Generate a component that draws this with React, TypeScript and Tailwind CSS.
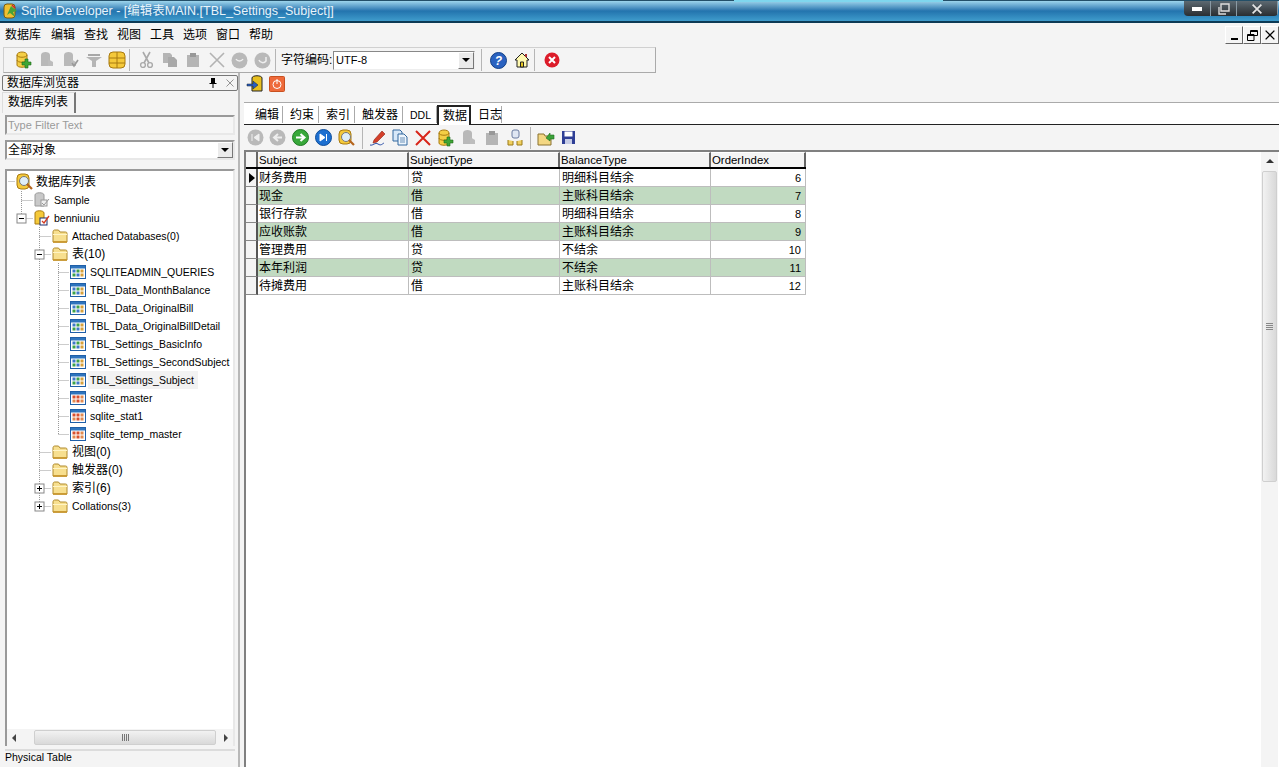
const FONT = "font-['Liberation_Sans','Noto_Sans_CJK_SC',sans-serif]";

function DbAdd() {
  return (
    <svg width="18" height="18" viewBox="0 0 18 18">
      <path d="M2 4c0-4 10-4 10 0v10c0 3-10 3-10 0z" fill="#f5cf45" stroke="#a87a10" />
      <path d="M2 4c0 3 10 3 10 0M2 9c0 3 10 3 10 0" fill="none" stroke="#a87a10" />
      <path d="M10 8h3v3h3v3h-3v3h-3v-3H7v-3h3z" fill="#3fa535" stroke="#1d6a1a" strokeWidth=".6" />
    </svg>
  );
}

function GrayDb({ check }: { check?: boolean }) {
  return (
    <svg width="18" height="18" viewBox="0 0 18 18">
      <path d="M3 4c0-4 9-4 9 0v11H3z" fill="#b9b9b9" />
      <path d="M10 8l5 3v4h-5z" fill="#bdbdbd" />
      {check && <path d="M11 12l2 3 4-6" fill="none" stroke="#9a9a9a" strokeWidth="1.6" />}
    </svg>
  );
}

function DbGrid() {
  return (
    <svg width="18" height="18" viewBox="0 0 18 18">
      <rect x="1" y="1" width="16" height="16" rx="4" fill="#f5c93a" stroke="#a87a10" />
      <path d="M1 7h16M1 12h16M9 1v16" stroke="#a87a10" />
    </svg>
  );
}

function Filter() {
  return (
    <svg width="18" height="18" viewBox="0 0 18 18">
      <path d="M3 3h12v2H3z" fill="#a8a8a8" />
      <path d="M1 6h16l-6 4v6H7v-6z" fill="#b5b5b5" />
    </svg>
  );
}

function Scissors() {
  return (
    <svg width="16" height="18" viewBox="0 0 16 18" fill="none" stroke="#aaa">
      <path d="M4 1l6 11M11 1L5 12" strokeWidth="1.6" />
      <circle cx="4" cy="14" r="2.4" strokeWidth="1.4" />
      <circle cx="11" cy="14" r="2.4" strokeWidth="1.4" />
    </svg>
  );
}

function GrayCopy() {
  return (
    <svg width="16" height="16" viewBox="0 0 16 16" fill="#b5b5b5">
      <path d="M1 1h7l2 2v8H1z" />
      <path d="M6 5h6l3 3v7H6z" fill="#a9a9a9" />
    </svg>
  );
}

function GrayPaste() {
  return (
    <svg width="16" height="16" viewBox="0 0 16 16">
      <path d="M2 3h12v12H2z" fill="#b5b5b5" />
      <path d="M5 1h6v4H5z" fill="#989898" />
    </svg>
  );
}

function Cross({ color = "#b3b3b3", w = 1.6, s = 16 }: { color?: string; w?: number; s?: number }) {
  return (
    <svg width={s} height={s} viewBox="0 0 16 16">
      <path d="M1 1l14 14M15 1L1 15" stroke={color} strokeWidth={w} />
    </svg>
  );
}

function Round({ kind }: { kind: "undo" | "redo" | "first" | "prev" }) {
  return (
    <svg width="17" height="17" viewBox="0 0 17 17">
      <circle cx="8.5" cy="8.5" r="8" fill="#b9b9b9" />
      {kind === "undo" && <path d="M5 7a4 4 0 0 0 7 0" fill="none" stroke="#eee" strokeWidth="1.5" />}
      {kind === "redo" && <path d="M5 8a4 4 0 0 0 7 1V5" fill="none" stroke="#eee" strokeWidth="1.5" />}
      {kind === "first" && <path d="M5 5v7M12 5L7 8.5l5 3.5z" fill="#eee" stroke="#eee" />}
      {kind === "prev" && <path d="M13 8.5H6M9 5L5 8.5 9 12" fill="none" stroke="#eee" strokeWidth="2" />}
    </svg>
  );
}

function GreenNext() {
  return (
    <svg width="17" height="17" viewBox="0 0 17 17">
      <circle cx="8.5" cy="8.5" r="8" fill="#38a83a" stroke="#1f7a24" />
      <path d="M4 8.5h8M8.5 5l4 3.5-4 3.5" fill="none" stroke="#fff" strokeWidth="2" />
    </svg>
  );
}

function BlueLast() {
  return (
    <svg width="17" height="17" viewBox="0 0 17 17">
      <circle cx="8.5" cy="8.5" r="8" fill="#1c6fd0" stroke="#0f4d9a" />
      <path d="M5 5l5 3.5L5 12zM11.5 5v7" fill="#fff" stroke="#fff" />
    </svg>
  );
}

function SearchDb() {
  return (
    <svg width="18" height="18" viewBox="0 0 18 18">
      <rect x="1" y="1" width="12" height="14" rx="4" fill="#f5c93a" stroke="#a87a10" />
      <circle cx="8" cy="8" r="4.5" fill="#dfeef8" stroke="#777" />
      <path d="M11 11l5 5" stroke="#b5651d" strokeWidth="2.2" />
    </svg>
  );
}

function Help() {
  return (
    <svg width="17" height="17" viewBox="0 0 17 17">
      <circle cx="8.5" cy="8.5" r="8" fill="#2a62c0" stroke="#123f86" />
      <text x="8.5" y="13" textAnchor="middle" fontSize="12" fontWeight="700" fill="#fff" fontStyle="italic">?</text>
    </svg>
  );
}

function Home() {
  return (
    <svg width="16" height="16" viewBox="0 0 16 16">
      <path d="M1 8l7-7 7 7h-2v7H3V8z" fill="#fff9b0" stroke="#222" />
      <path d="M6.5 15v-5h3v5z" fill="#e8c820" stroke="#222" />
      <path d="M11 2h2v3h-2z" fill="#a33" />
    </svg>
  );
}

function RedX() {
  return (
    <svg width="16" height="16" viewBox="0 0 16 16">
      <circle cx="8" cy="8" r="7.5" fill="#dc1c2a" />
      <path d="M5 5l6 6M11 5l-6 6" stroke="#fff" strokeWidth="2" />
    </svg>
  );
}

function Pencil() {
  return (
    <svg width="18" height="18" viewBox="0 0 18 18">
      <path d="M5 11L13 2l3 3-8 8-4 1z" fill="#d4402a" stroke="#8c2014" strokeWidth=".6" />
      <path d="M1 16c3 1 5-3 8-1s4 0 6-1" fill="none" stroke="#2b4fa8" />
    </svg>
  );
}

function CopyBlue() {
  return (
    <svg width="16" height="17" viewBox="0 0 16 17">
      <path d="M1 1h7l2 2v9H1z" fill="#d7e8f8" stroke="#33689f" />
      <path d="M6 5h6l3 3v8H6z" fill="#eef6fd" stroke="#33689f" />
      <path d="M8 9h5M8 11h5M8 13h5" stroke="#6a90b8" />
    </svg>
  );
}

function GroupDb() {
  return (
    <svg width="18" height="18" viewBox="0 0 18 18">
      <rect x="6" y="1" width="7" height="8" rx="2" fill="#dfe6f3" stroke="#6a7ba0" />
      <path d="M2 11v5h5v-4M11 12v4h5v-5" fill="#f0d060" stroke="#9a7a18" />
    </svg>
  );
}

function OpenFolder() {
  return (
    <svg width="18" height="18" viewBox="0 0 18 18">
      <path d="M1 5h6l1 2h6v9H1z" fill="#f3d783" stroke="#8a7330" />
      <path d="M9 9l4-5v2h4v4h-4v2z" fill="#3aa23a" stroke="#1e6e20" strokeWidth=".6" />
    </svg>
  );
}

function Save() {
  return (
    <svg width="15" height="15" viewBox="0 0 15 15">
      <path d="M1 1h13v13H1z" fill="#2f3f96" />
      <path d="M3.5 1.5h8v5h-8z" fill="#fff" />
      <path d="M4 9h7v5H4z" fill="#c7cde6" />
    </svg>
  );
}

function Folder() {
  return (
    <svg width="16" height="14" viewBox="0 0 16 14">
      <path d="M1 3c0-1 .5-2 1.5-2h4L8 3h5.500c1 0 1.500 .5 1.500 1.500V13H1z" fill="#f7df8f" stroke="#b08a2c" />
      <path d="M1 5.500h14" stroke="#fff4c4" />
      <path d="M1 13h14" stroke="#c9952a" strokeWidth="1.6" />
    </svg>
  );
}

function TableIcon({ system }: { system?: boolean }) {
  const colors = system
    ? ["#d9502e", "#d9502e", "#e28a50", "#e28a50", "#d9502e", "#e28a50"]
    : ["#3f78c8", "#3da24a", "#d7a03a", "#3da24a", "#3f78c8", "#d7a03a"];
  return (
    <svg width="16" height="14" viewBox="0 0 16 14">
      <rect x=".5" y=".5" width="15" height="13" fill="#fff" stroke="#1f5fa8" />
      <rect x="1" y="1" width="14" height="2.5" fill="#2e74bd" />
      {colors.map((c, i) => (
        <rect key={i} x={2.5 + (i % 3) * 4} y={i < 3 ? 4.5 : 8.5} width="3" height="3" fill={c} />
      ))}
    </svg>
  );
}

function TitleLogo() {
  return (
    <svg width="16" height="16" viewBox="0 0 16 16">
      <rect x="1" y="1" width="11" height="14" rx="3" fill="#f0c030" stroke="#7a5a10" />
      <path d="M8 3l6 5-4 1 2 5-5-4-3 2z" fill="#48a238" />
      <path d="M9 2l3 3" stroke="#c23" strokeWidth="1.5" />
    </svg>
  );
}

function Sep() {
  return <div className="w-px h-[22px] bg-[#b5b5b5] ml-[1px] mr-[5px] shrink-0" />;
}

function SepWide() {
  return <div className="w-px h-[22px] bg-[#b5b5b5] mx-[4px] shrink-0" />;
}

function Slot({ w = 23, children }: { w?: number; children: React.ReactNode }) {
  return (
    <div className="flex items-center justify-center shrink-0 h-full" style={{ width: w }}>
      {children}
    </div>
  );
}

function ComboArrow() {
  return (
    <div className="w-[16px] h-full bg-[#ebebeb] border border-t-white border-l-white border-b-[#777] border-r-[#777] flex items-center justify-center shrink-0">
      <div className="w-0 h-0 border-x-[4px] border-x-transparent border-t-[4px] border-t-black" />
    </div>
  );
}

function WinBtn({ children, w }: { children: React.ReactNode; w: string }) {
  return <div className={`${w} h-[15px] bg-gradient-to-b from-[#5d6a72] to-[#2a2e32] border-r border-[#8a9aa4] flex items-center justify-center`}>{children}</div>;
}

function MdiBtn({ children }: { children: React.ReactNode }) {
  return (
    <div className="w-[18px] h-[18px] bg-[#f4f4f4] border border-t-white border-l-white border-b-[#666] border-r-[#666] flex items-center justify-center">
      {children}
    </div>
  );
}

function TitleBar() {
  return (
    <div className="relative h-[23px] shrink-0 flex items-center pl-[3px] border-b-2 border-[#0c3a55] border-t border-t-[#234f68] bg-gradient-to-b from-[#9dd5ec] via-[#2374ae] to-[#3f9ccc]">
      <div className="absolute top-[-1px] left-[734px] w-[209px] h-[2px] bg-[#7fd6ee]" />
      <TitleLogo />
      <span className="ml-[2px] text-[12.5px] text-[#e8f4fa] whitespace-nowrap">Sqlite Developer - [编辑表MAIN.[TBL_Settings_Subject]]</span>
      <div className="ml-auto mb-[5px] flex rounded-b-[4px] overflow-hidden mr-px">
        <WinBtn w="w-[27px]"><div className="w-[10px] h-[4px] bg-white" /></WinBtn>
        <WinBtn w="w-[26px]">
          <svg width="12" height="12" viewBox="0 0 12 12" fill="none" stroke="#ddd" strokeWidth="1.4"><path d="M3 1h8v7H3zM1 4v7h7" /></svg>
        </WinBtn>
        <WinBtn w="w-[41px]"><Cross color="#e4e4e4" w={2.8} s={10} /></WinBtn>
      </div>
    </div>
  );
}

function MenuBar() {
  const items = ["数据库", "编辑", "查找", "视图", "工具", "选项", "窗口", "帮助"];
  return (
    <div className="h-[24px] shrink-0 flex items-center pl-[5px] bg-[#f4f4f4] text-[12px] text-black">
      {items.map((m, i) => (
        <span key={m} className={i === 0 ? "mr-[10px]" : "mr-[9px]"}>{m}</span>
      ))}
      <div className="ml-auto flex">
        <MdiBtn><div className="w-[7px] h-[2px] bg-black mt-[8px]" /></MdiBtn>
        <MdiBtn>
          <svg width="11" height="11" viewBox="0 0 11 11" fill="none" stroke="#000"><path d="M3.5 .5h7v5h-7zM3.5 1.5h7M.5 4.500h6.500v6H.5zM.5 5.500h6.500" /></svg>
        </MdiBtn>
        <MdiBtn><Cross color="#000" w={2.2} s={10} /></MdiBtn>
      </div>
    </div>
  );
}

function MainToolbar() {
  return (
    <div className="h-[26px] shrink-0 bg-[#f4f4f4] pl-[3px] flex">
      <div className="w-[653px] h-[26px] border border-[#d0d0d0] border-b-[#aaa] border-r-[#aaa] flex items-center pl-[8px]">
        <Slot><DbAdd /></Slot>
        <Slot><GrayDb /></Slot>
        <Slot w={24}><GrayDb check /></Slot>
        <Slot><Filter /></Slot>
        <Slot><DbGrid /></Slot>
        <Sep />
        <Slot w={23}><Scissors /></Slot>
        <Slot><GrayCopy /></Slot>
        <Slot w={24}><GrayPaste /></Slot>
        <Slot><Cross /></Slot>
        <Slot><Round kind="undo" /></Slot>
        <Slot><Round kind="redo" /></Slot>
        <Sep />
        <span className="text-[12px] whitespace-nowrap w-[52px] shrink-0">字符编码:</span>
        <div className="w-[142px] h-[19px] shrink-0 flex bg-white border border-[#888] border-r-[#eee] border-b-[#eee] items-center">
          <span className="text-[11px] pl-[2px] flex-1">UTF-8</span>
          <ComboArrow />
        </div>
        <div className="w-[5px] shrink-0" />
        <Sep />
        <Slot w={23}><Help /></Slot>
        <Slot><Home /></Slot>
        <Sep />
        <Slot w={24}><RedX /></Slot>
      </div>
    </div>
  );
}

type Row = {
  label: string;
  icon: React.ReactNode;
  level: number;
  box?: "+" | "-";
  cont?: number[];
  endAt?: number;
  sel?: boolean;
  h?: number;
};

// x positions are measured from the inner edge of the tree box
function Guides({ row }: { row: Row }) {
  const h = row.h ?? 18;
  const iconX = [9, 27, 45, 63][row.level];
  const elbowFrom = [1, 14, 32, 51][row.level];
  const mid = Math.floor(h / 2) + 0.5;
  return (
    <svg width={iconX} height={h} className="shrink-0">
      {(row.cont ?? []).map((x) => (
        <path key={x} d={`M${x + 0.5} 0V${h}`} stroke="#999" strokeDasharray="1 1" />
      ))}
      {row.endAt !== undefined && <path d={`M${row.endAt + 0.5} 0V${mid}`} stroke="#999" strokeDasharray="1 1" />}
      <path d={`M${elbowFrom + 0.5} ${mid}H${iconX - 1}`} stroke="#999" strokeDasharray="1 1" />
      {row.box && (
        <g>
          <rect x={elbowFrom - 4} y={mid - 4.5} width="9" height="9" fill="#fff" stroke="#888" />
          <path d={`M${elbowFrom - 2} ${mid}h5`} stroke="#000" />
          {row.box === "+" && <path d={`M${elbowFrom + 0.5} ${mid - 2.5}v5`} stroke="#000" />}
        </g>
      )}
    </svg>
  );
}

const rootDb = (
  <svg width="18" height="18" viewBox="0 0 18 18">
    <rect x="1" y="1" width="12" height="15" rx="4" fill="#f5c93a" stroke="#a87a10" />
    <circle cx="8" cy="8" r="4.5" fill="#dfeef8" stroke="#777" />
    <path d="M11 11l5 5" stroke="#b5651d" strokeWidth="2.2" />
  </svg>
);
const sampleDb = (
  <svg width="16" height="16" viewBox="0 0 16 16">
    <path d="M1 3c0-3 9-3 9 0v11H1z" fill="#c9c9c9" stroke="#9a9a9a" />
    <rect x="7" y="8" width="6" height="6" fill="#eee" stroke="#999" />
    <path d="M8 11l2 2 5-6" fill="none" stroke="#999" />
  </svg>
);
const openDb = (
  <svg width="16" height="16" viewBox="0 0 16 16">
    <path d="M1 3c0-3 9-3 9 0v11H1z" fill="#f5c93a" stroke="#a87a10" />
    <rect x="6" y="8" width="7" height="7" fill="#fff" stroke="#1c2f6e" />
    <path d="M8 11l2 2 5-7" fill="none" stroke="#d33a20" strokeWidth="1.3" />
  </svg>
);

const L1 = [32];
const L2 = [32, 51];
const tree: Row[] = [
  { label: "数据库列表", icon: rootDb, level: 0, h: 19 },
  { label: "Sample", icon: sampleDb, level: 1, cont: [14] },
  { label: "benniuniu", icon: openDb, level: 1, box: "-", endAt: 14 },
  { label: "Attached Databases(0)", icon: <Folder />, level: 2, cont: L1 },
  { label: "表(10)", icon: <Folder />, level: 2, box: "-", cont: L1 },
  { label: "SQLITEADMIN_QUERIES", icon: <TableIcon />, level: 3, cont: L2 },
  { label: "TBL_Data_MonthBalance", icon: <TableIcon />, level: 3, cont: L2 },
  { label: "TBL_Data_OriginalBill", icon: <TableIcon />, level: 3, cont: L2 },
  { label: "TBL_Data_OriginalBillDetail", icon: <TableIcon />, level: 3, cont: L2 },
  { label: "TBL_Settings_BasicInfo", icon: <TableIcon />, level: 3, cont: L2 },
  { label: "TBL_Settings_SecondSubject", icon: <TableIcon />, level: 3, cont: L2 },
  { label: "TBL_Settings_Subject", icon: <TableIcon />, level: 3, cont: L2, sel: true },
  { label: "sqlite_master", icon: <TableIcon system />, level: 3, cont: L2 },
  { label: "sqlite_stat1", icon: <TableIcon system />, level: 3, cont: L2 },
  { label: "sqlite_temp_master", icon: <TableIcon system />, level: 3, cont: L1, endAt: 51 },
  { label: "视图(0)", icon: <Folder />, level: 2, cont: L1 },
  { label: "触发器(0)", icon: <Folder />, level: 2, cont: L1 },
  { label: "索引(6)", icon: <Folder />, level: 2, box: "+", cont: L1 },
  { label: "Collations(3)", icon: <Folder />, level: 2, box: "+", endAt: 32 },
];

function isCjk(s: string) {
  return /[\u4e00-\u9fff]/.test(s);
}

function TreeRow({ row }: { row: Row }) {
  return (
    <div className="flex items-center" style={{ height: row.h ?? 18 }}>
      <Guides row={row} />
      <div className="w-[18px] shrink-0 flex justify-start">{row.icon}</div>
      <span className={`pl-[2px] pr-[4px] leading-[18px] whitespace-nowrap ${isCjk(row.label) ? "text-[12px]" : "text-[10.5px]"} ${row.sel ? "bg-[#f2f2f2]" : ""}`}>
        {row.label}
      </span>
    </div>
  );
}

function HScroll() {
  return (
    <div className="h-[17px] shrink-0 flex items-center bg-[#f4f4f4]">
      <div className="w-[27px] pl-[5px] shrink-0">
        <div className="w-0 h-0 border-y-[4px] border-y-transparent border-r-[4px] border-r-[#444]" />
      </div>
      <div className="flex-1 h-[15px] rounded-[2px] border border-[#cfcfcf] bg-gradient-to-b from-[#f2f2f2] to-[#d9d9d9] flex items-center justify-center gap-px">
        <div className="w-px h-[7px] bg-[#777]" />
        <div className="w-px h-[7px] bg-[#777]" />
        <div className="w-px h-[7px] bg-[#777]" />
        <div className="w-px h-[7px] bg-[#777]" />
      </div>
      <div className="w-[17px] pl-[8px] shrink-0">
        <div className="w-0 h-0 border-y-[4px] border-y-transparent border-l-[4px] border-l-[#444]" />
      </div>
    </div>
  );
}

function LeftPanel() {
  return (
    <div className="w-[240px] shrink-0 flex flex-col bg-[#f4f4f4] border-r-2 border-[#b8b8b8] pl-[2px]">
      <div className="h-[16px] mt-[2px] shrink-0 border border-[#777] rounded-[2px] flex items-center pl-[4px] bg-[#f4f4f4]">
        <span className="text-[12px] leading-none">数据库浏览器</span>
        <svg className="ml-auto mr-[9px]" width="8" height="10" viewBox="0 0 8 10">
          <path d="M2 0h4v5h1.5v1h-7V5H2zM3.500 6h1v4h-1z" fill="#000" />
        </svg>
        <div className="mr-[3px]"><Cross color="#333" w={1} s={8} /></div>
      </div>
      <div className="h-[21px] mt-[1px] shrink-0 flex">
        <div className="w-[74px] border-l border-[#ddd] border-t border-t-[#ddd] border-r-2 border-r-[#777] text-[12px] pl-[5px] leading-[19px] bg-[#f4f4f4]">数据库列表</div>
        <div className="flex-1 border-b border-[#f4f4f4]" />
      </div>
      <div className="flex-1 min-h-0 flex flex-col pl-[3px] pr-[3px] pt-[2px]">
        <div className="h-[20px] shrink-0 bg-[#f6f6f6] border-2 border-[#999] border-r-[#e8e8e8] border-b-[#e8e8e8] text-[11px] text-[#9a9a9a] pl-[1px] leading-[16px]">
          Type Filter Text
        </div>
        <div className="h-[20px] mt-[5px] shrink-0 flex bg-white border-2 border-[#999] border-r-[#e8e8e8] border-b-[#e8e8e8] items-center">
          <span className="text-[12px] pl-[1px] flex-1">全部对象</span>
          <ComboArrow />
        </div>
        <div className="mt-[9px] flex-1 min-h-0 flex flex-col bg-white border-l-2 border-t-2 border-[#999] border-r-2 border-r-[#e8e8e8]">
          <div className="flex-1 min-h-0 pt-px overflow-hidden">
            {tree.map((r) => (
              <TreeRow key={r.label} row={r} />
            ))}
          </div>
          <HScroll />
        </div>
        <div className="h-[18px] shrink-0 mt-[3px] border-t-2 border-[#dcdcdc] text-[10.5px] leading-[12px] whitespace-nowrap">Physical Table</div>
      </div>
    </div>
  );
}

const gridRows = [
  ["财务费用", "贷", "明细科目结余", "6"],
  ["现金", "借", "主账科目结余", "7"],
  ["银行存款", "借", "明细科目结余", "8"],
  ["应收账款", "借", "主账科目结余", "9"],
  ["管理费用", "贷", "不结余", "10"],
  ["本年利润", "贷", "不结余", "11"],
  ["待摊费用", "借", "主账科目结余", "12"],
];

function DataGrid() {
  const heads = ["Subject", "SubjectType", "BalanceType", "OrderIndex"];
  return (
    <div className="w-[560px]">
      <div className="grid grid-cols-[12px_151px_151px_151px_95px] h-[17px] bg-[#f4f4f4] border-b-2 border-black">
        <div className="border-r-2 border-[#666]" />
        {heads.map((h) => (
          <div key={h} className="border-r-2 border-[#666] text-[11.4px] leading-[14px] pl-px border-t border-t-white">{h}</div>
        ))}
      </div>
      {gridRows.map((r, i) => (
        <div key={r[0]} className={`grid grid-cols-[12px_151px_151px_151px_95px] h-[18px] border-b border-[#bdbdbd] text-[12px] leading-[18px] ${i % 2 ? "bg-[#c1dac1]" : "bg-white"}`}>
          <div className="bg-[#f4f4f4] border-r-2 border-[#555] border-b border-b-[#888] flex items-center pl-[3px]">
            {i === 0 && <div className="w-0 h-0 border-y-[5px] border-y-transparent border-l-[6px] border-l-black" />}
          </div>
          <div className="border-r border-[#bdbdbd] pl-[1px]">{r[0]}</div>
          <div className="border-r border-[#bdbdbd] pl-[2px]">{r[1]}</div>
          <div className="border-r border-[#bdbdbd] pl-[2px]">{r[2]}</div>
          <div className="border-r border-[#bdbdbd] pr-[4px] text-right text-[11px]">{r[3]}</div>
        </div>
      ))}
    </div>
  );
}

function VScroll() {
  return (
    <div className="w-[17px] shrink-0 flex flex-col items-center bg-[#f4f4f4] mr-px">
      <div className="h-[17px] flex items-center justify-center shrink-0">
        <div className="w-0 h-0 border-x-[4px] border-x-transparent border-b-[4px] border-b-[#333]" />
      </div>
      <div className="mt-[2px] h-[311px] w-[15px] border border-[#cfcfcf] bg-gradient-to-r from-[#f2f2f2] to-[#d9d9d9] rounded-[2px] flex flex-col items-center justify-center gap-px">
        <div className="h-px w-[7px] bg-[#888]" />
        <div className="h-px w-[7px] bg-[#888]" />
        <div className="h-px w-[7px] bg-[#888]" />
        <div className="h-px w-[7px] bg-[#888]" />
      </div>
    </div>
  );
}

const TABS = [
  { t: "编辑", w: "w-[35px] pl-[7px] text-[12px]" },
  { t: "约束", w: "w-[36px] pl-[7px] text-[12px]" },
  { t: "索引", w: "w-[36px] pl-[7px] text-[12px]" },
  { t: "触发器", w: "w-[48px] pl-[7px] text-[12px]" },
  { t: "DDL", w: "w-[34px] pl-[7px] text-[10.5px]" },
  { t: "数据", w: "w-[34px] pl-[4px] text-[12px]" },
  { t: "日志", w: "w-[31px] pl-[7px] text-[12px]" },
];

function RightPanel() {
  return (
    <div className="flex-1 min-w-0 ml-[4px] flex flex-col bg-[#f4f4f4]">
      <div className="h-[30px] shrink-0 border-b border-[#aaa] pl-px">
        <div className="h-[22px] flex items-center">
          <Slot w={19}>
            <svg width="18" height="18" viewBox="0 0 18 18">
              <path d="M6 3c0-3 10-3 10 0v13H6z" fill="#e8c020" stroke="#222" />
              <path d="M1 9h6V6l5 4-5 4v-3H1z" fill="#2a5ec0" stroke="#123" strokeWidth=".5" />
            </svg>
          </Slot>
          <Slot w={25}>
            <svg width="16" height="16" viewBox="0 0 16 16">
              <rect x=".5" y=".5" width="15" height="15" rx="1" fill="#ee6a3a" stroke="#c85020" />
              <circle cx="8" cy="8.5" r="4" fill="none" stroke="#fff" />
              <path d="M8 3v5" stroke="#fff" />
            </svg>
          </Slot>
        </div>
      </div>
      <div className="h-[22px] shrink-0 bg-white border-b border-[#222] flex items-end pl-[4px]">
        {TABS.map(({ t, w }) => {
          const active = t === "数据";
          return (
            <div
              key={t}
              className={`${w} whitespace-nowrap ${active ? "h-[20px] leading-[18px] border-x-2 border-t-2 border-[#222] mb-[-1px] bg-white" : "h-[17px] leading-[19px] mb-[1px] border-r border-[#aaa]"}`}
            >
              {t}
            </div>
          );
        })}
      </div>
      <div className="h-[25px] shrink-0 flex items-center bg-[#f4f4f4]">
        <Slot w={22}><Round kind="first" /></Slot>
        <Slot><Round kind="prev" /></Slot>
        <Slot><GreenNext /></Slot>
        <Slot><BlueLast /></Slot>
        <Slot><SearchDb /></Slot>
        <SepWide />
        <Slot w={21}><Pencil /></Slot>
        <Slot><CopyBlue /></Slot>
        <Slot><Cross color="#d8261a" w={2} /></Slot>
        <Slot><DbAdd /></Slot>
        <Slot><GrayDb /></Slot>
        <Slot><GrayPaste /></Slot>
        <Slot w={23}><GroupDb /></Slot>
        <SepWide />
        <Slot w={21}><OpenFolder /></Slot>
        <Slot w={24}><Save /></Slot>
      </div>
      <div className="flex-1 min-h-0 flex bg-white border-t-2 border-[#808080] border-l-2 border-l-[#808080]">
        <div className="flex-1 min-w-0"><DataGrid /></div>
        <VScroll />
      </div>
    </div>
  );
}

export default function App() {
  return (
    <div className={`w-[1279px] h-[767px] overflow-hidden flex flex-col bg-[#f4f4f4] text-black ${FONT}`}>
      <TitleBar />
      <MenuBar />
      <MainToolbar />
      <div className="flex-1 min-h-0 flex">
        <LeftPanel />
        <RightPanel />
      </div>
    </div>
  );
}
